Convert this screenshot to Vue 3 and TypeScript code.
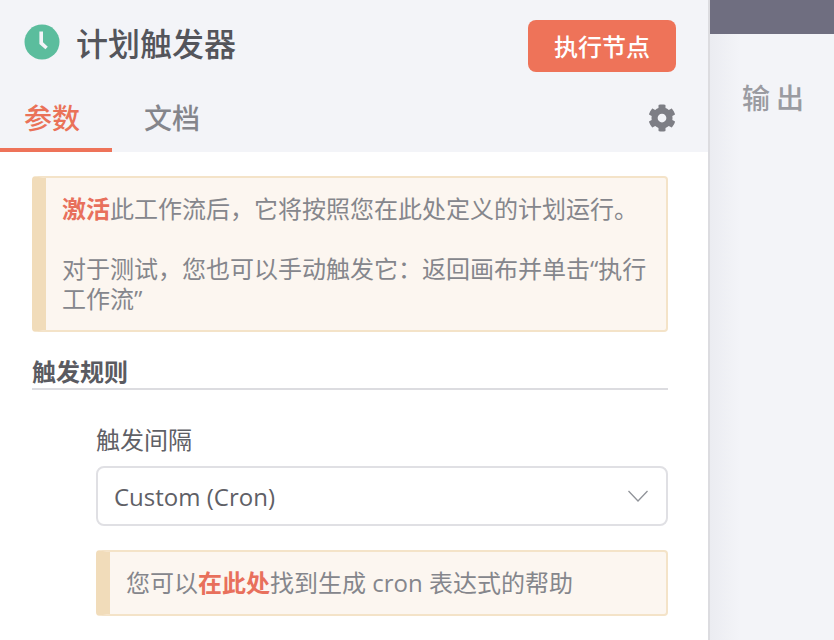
<template>
  <div class="page">
    <section class="panel">
      <header class="panel-head">
        <div class="title-row">
          <div class="title">
            <svg class="clock" viewBox="0 0 36 36">
              <circle cx="18" cy="18" r="17.5" fill="#5bbd9d" />
              <path d="M15.4 7.5h3.6v10.8l4.8 4.4-2.4 2.6-6-5.4z" fill="#f3f4f8" />
            </svg>
            <span class="title-text">计划触发器</span>
          </div>
          <button class="run-btn">执行节点</button>
        </div>
        <div class="tabs">
          <div v-for="tab in tabs" :key="tab" class="tab" :class="{ active: tab === activeTab }">{{ tab }}</div>
          <svg class="gear" viewBox="0 0 512 512">
            <path
              fill="#7d7e85"
              d="M487.4 315.7l-42.6-24.6c4.3-23.2 4.3-47 0-70.2l42.6-24.6c4.9-2.8 7.1-8.6 5.5-14-11.1-35.6-30-67.8-54.7-94.6-3.8-4.1-10-5.1-14.8-2.3L380.8 110c-17.9-15.4-38.5-27.3-60.8-35.1V25.8c0-5.6-3.9-10.5-9.4-11.7-36.7-8.2-74.3-7.8-109.2 0-5.5 1.2-9.4 6.1-9.4 11.7V75c-22.2 7.9-42.8 19.8-60.8 35.1L88.7 85.5c-4.9-2.8-11-1.9-14.8 2.3-24.7 26.7-43.6 58.9-54.7 94.6-1.7 5.4.6 11.2 5.5 14L67.3 221c-4.3 23.2-4.3 47 0 70.2l-42.6 24.6c-4.9 2.8-7.1 8.6-5.5 14 11.1 35.6 30 67.8 54.7 94.6 3.8 4.1 10 5.1 14.8 2.3l42.6-24.6c17.9 15.4 38.5 27.3 60.8 35.1v49.2c0 5.6 3.9 10.5 9.4 11.7 36.7 8.2 74.3 7.8 109.2 0 5.5-1.2 9.4-6.1 9.4-11.7v-49.2c22.2-7.9 42.8-19.8 60.8-35.1l42.6 24.6c4.9 2.8 11 1.9 14.8-2.3 24.7-26.7 43.6-58.9 54.7-94.6 1.5-5.5-.7-11.3-5.6-14.1zM256 336c-44.1 0-80-35.9-80-80s35.9-80 80-80 80 35.9 80 80-35.9 80-80 80z"
            />
          </svg>
        </div>
      </header>
      <div class="panel-body">
        <div class="notice">
          <p><b>激活</b>此工作流后，它将按照您在此处定义的计划运行。</p>
          <p class="spaced">对于测试，您也可以手动触发它：返回画布并单击“执行工作流”</p>
        </div>
        <div class="section-title">触发规则</div>
        <div class="field">
          <label class="field-label">触发间隔</label>
          <div class="select">
            <span>Custom (Cron)</span>
            <svg class="chevron" viewBox="0 0 20 12">
              <path d="M0.5 1l9.5 10 9.5-10" fill="none" stroke="#909399" stroke-width="1.3" />
            </svg>
          </div>
          <div class="notice small">
            <p>您可以<b>在此处</b>找到生成 cron 表达式的帮助</p>
          </div>
        </div>
      </div>
    </section>
    <aside class="output">
      <div class="top-bar"></div>
      <div class="output-label">输出</div>
    </aside>
  </div>
</template>

<script setup lang="ts">
const tabs: string[] = ['参数', '文档']
const activeTab = '参数'
</script>

<style>
body {
  margin: 0;
  overflow: hidden;
}
</style>

<style scoped>
.page {
  display: flex;
  width: 834px;
  height: 640px;
  overflow: hidden;
  font-family: "Open Sans", "Noto Sans CJK SC", sans-serif;
  background: #fff;
}

.panel {
  width: 708px;
  flex-shrink: 0;
  display: flex;
  flex-direction: column;
}

.panel-head {
  height: 152px;
  background: #f3f4f8;
  display: flex;
  flex-direction: column;
  justify-content: space-between;
}

.title-row {
  display: flex;
  justify-content: space-between;
  padding: 20px 32px 0 24px;
}

.title {
  display: flex;
  align-items: center;
  height: 44px;
}

.clock {
  width: 36px;
  height: 36px;
  margin-right: 17px;
}

.title-text {
  font-size: 32px;
  font-weight: 500;
  color: #54555b;
  margin-left: -1px;
}

.run-btn {
  width: 148px;
  height: 52px;
  border: none;
  border-radius: 8px;
  background: #ee7359;
  color: #fff;
  font-family: inherit;
  font-size: 24px;
  font-weight: 500;
  padding: 0 0 2px;
}

.tabs {
  display: flex;
  align-items: flex-start;
  height: 52px;
  position: relative;
}

.tab {
  width: 112px;
  height: 52px;
  box-sizing: border-box;
  padding-left: 24px;
  font-size: 28px;
  line-height: 36px;
  font-weight: 500;
  color: #84858b;
  margin-right: 8px;
}

.tab.active {
  color: #ea7259;
  border-bottom: 4px solid #ee7359;
}

.gear {
  width: 28px;
  height: 28px;
  margin-left: auto;
  margin-right: 32px;
  margin-top: 4px;
}

.panel-body {
  flex: 1;
  padding: 24px 40px 0 32px;
}

.notice {
  border: 2px solid #f4e3c8;
  border-left-width: 14px;
  border-left-color: #f1dcba;
  border-radius: 4px;
  background: #fcf6f0;
  padding: 16px 16px;
  font-size: 24px;
  line-height: 30px;
  color: #85868c;
}

.notice p {
  margin: 0;
}

.notice p.spaced {
  margin-top: 30px;
}

.notice b {
  color: #e8705c;
  font-weight: 700;
}

.section-title {
  margin-top: 24px;
  height: 32px;
  line-height: 32px;
  font-size: 24px;
  font-weight: 700;
  color: #5a5b61;
  border-bottom: 2px solid #dcdce0;
}

.field {
  margin-left: 64px;
  margin-top: 34px;
}

.field-label {
  display: block;
  font-size: 24px;
  line-height: 32px;
  color: #5f6066;
}

.select {
  margin-top: 10px;
  height: 60px;
  box-sizing: border-box;
  border: 2px solid #e0e0e4;
  border-radius: 8px;
  display: flex;
  align-items: center;
  justify-content: space-between;
  padding: 0 18px 0 16px;
  font-size: 24px;
  color: #5f6066;
}

.chevron {
  width: 20px;
  height: 12px;
}

.notice.small {
  margin-top: 24px;
  padding: 16px;
}

.output {
  flex: 1;
  border-left: 2px solid #dcdce0;
  background: linear-gradient(to right, #ebecf1, #f3f4f8 30px);
}

.top-bar {
  height: 34px;
  background: #6f6e80;
}

.output-label {
  margin-top: 46px;
  padding-left: 32px;
  font-size: 28px;
  line-height: 36px;
  letter-spacing: 6px;
  font-weight: 500;
  color: #9a9ba1;
}
</style>
